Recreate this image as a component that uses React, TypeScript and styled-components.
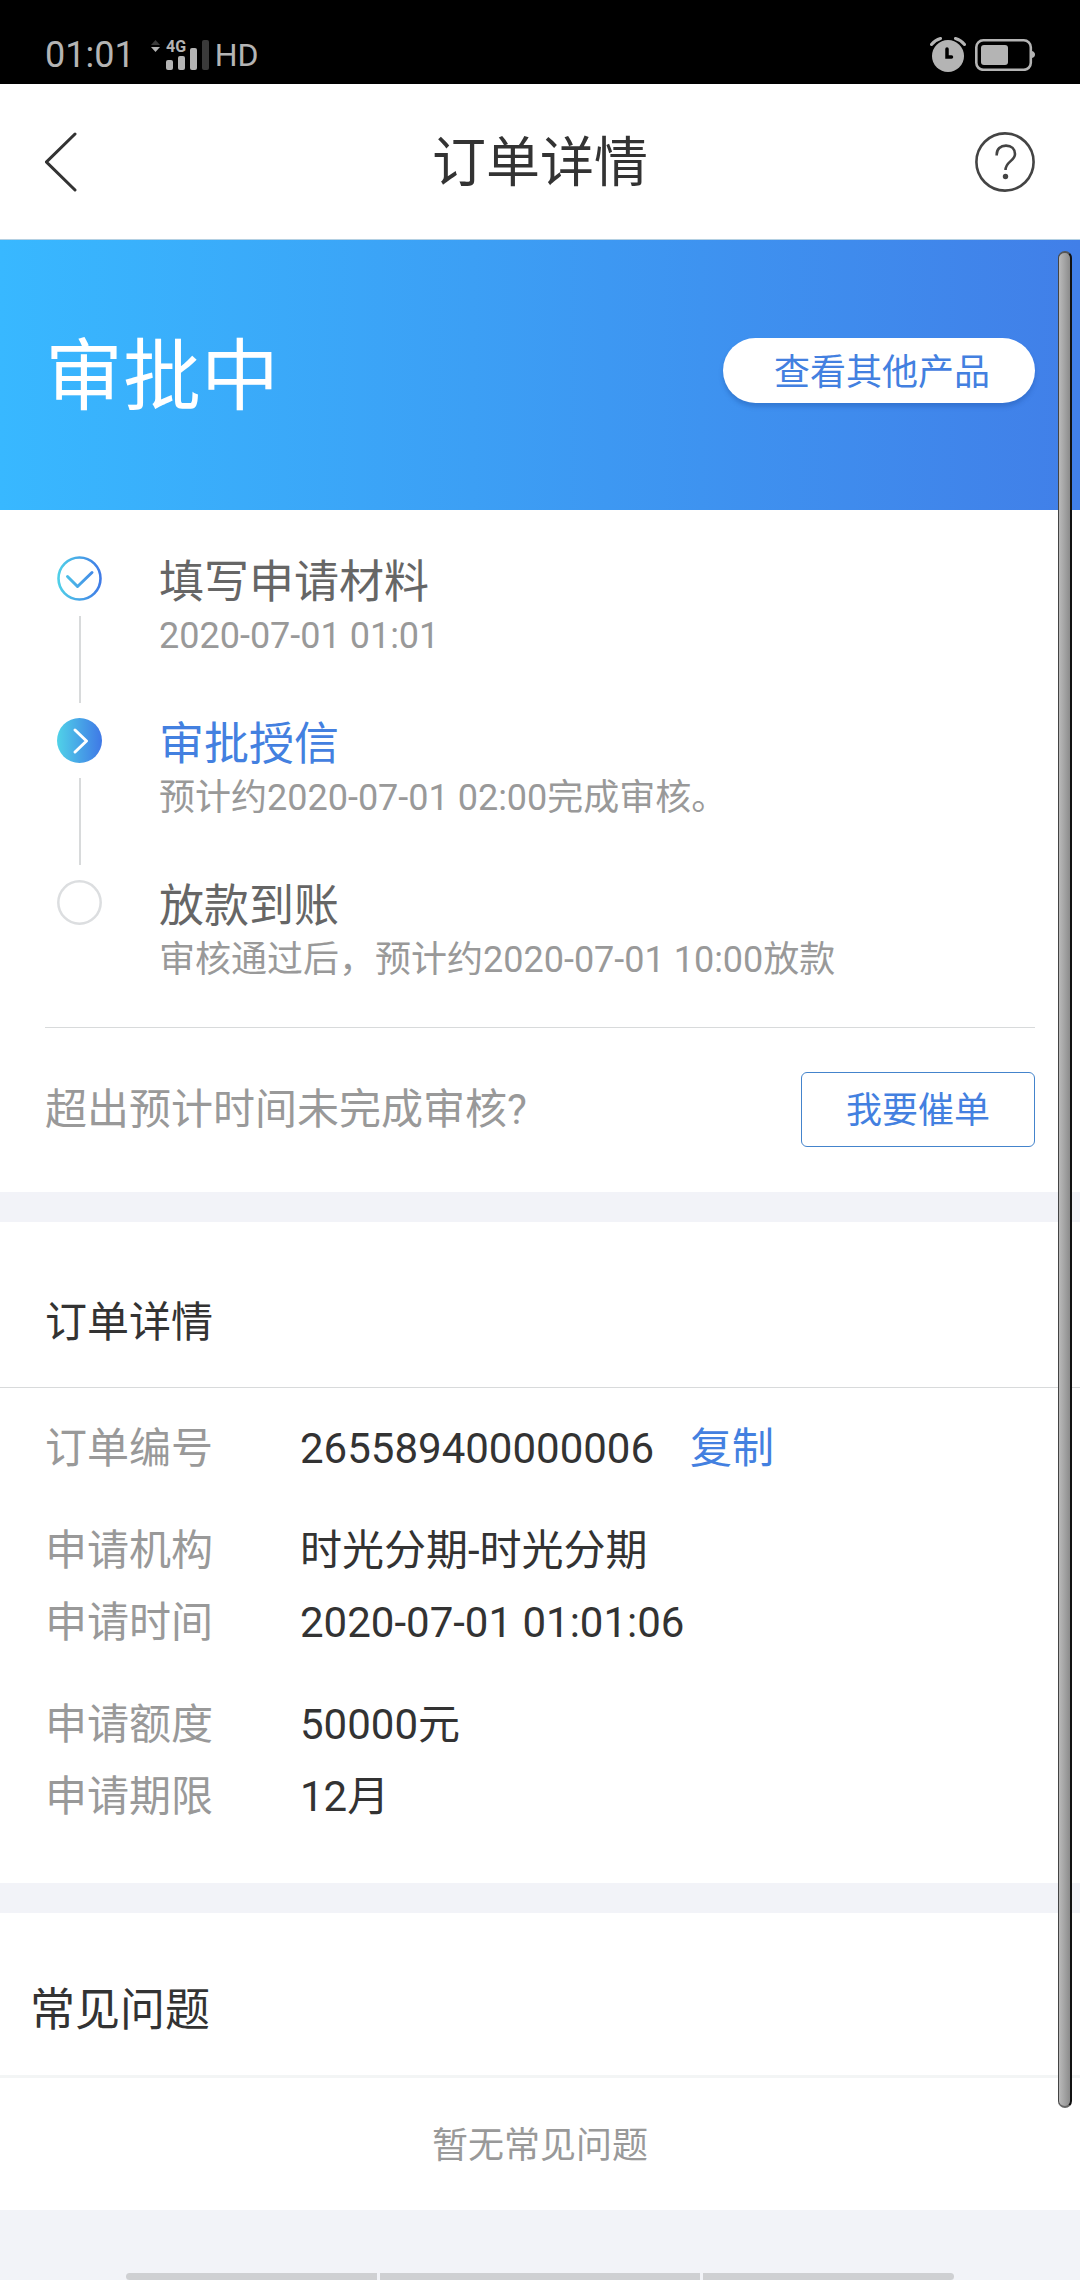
import React from "react";
import styled, { createGlobalStyle } from "styled-components";

const color = {
  ink: "#333333",
  inkSoft: "#666666",
  muted: "#999999",
  blue: "#4380e0",
  line: "#d8dadb",
  canvas: "#f2f3f8",
  system: "#b4b4b4",
  systemDim: "#3a3a3a",
};

const GlobalStyle = createGlobalStyle`
  *, *::before, *::after { box-sizing: border-box; }
  body {
    margin: 0;
    background: ${color.canvas};
    color: ${color.ink};
    font-family: Roboto, "Noto Sans CJK SC", sans-serif;
    font-size: 42px;
  }
  h1, h2, p, ol, dl, dd { margin: 0; padding: 0; font-weight: 400; }
  button { font-family: inherit; cursor: pointer; }
  svg { display: block; flex: none; }
`;

const Page = styled.div`
  position: relative;
  display: flex;
  flex-direction: column;
  min-height: 100vh;
`;

const StatusBar = styled.div`
  display: flex;
  align-items: center;
  justify-content: space-between;
  height: 84px;
  padding: 26px 45px 0;
  background: #000;
  color: ${color.system};
`;

const StatusGroup = styled.div<{ $gap: number }>`
  display: flex;
  align-items: center;
  gap: ${(p) => p.$gap}px;
`;

const StatusText = styled.span<{ $size: number }>`
  font-size: ${(p) => p.$size}px;
  line-height: 36px;
`;

const NavBar = styled.header`
  display: grid;
  grid-template-columns: 60px 1fr 60px;
  align-items: center;
  height: 156px;
  padding: 0 45px;
  background: #fff;
  border-bottom: 1px solid #b4d0e2;
`;

const NavTitle = styled.h1`
  padding-top: 4px;
  font-size: 54px;
  line-height: 72px;
  text-align: center;
`;

const IconButton = styled.button`
  width: 60px;
  height: 60px;
  padding: 0;
  border: 0;
  background: none;
`;

const Banner = styled.section`
  display: flex;
  align-items: flex-start;
  justify-content: space-between;
  padding: 98px 45px 92px;
  background: linear-gradient(90deg, #38b8ff, #417fe8);
`;

const BannerTitle = styled.h2`
  color: #fff;
  font-size: 78px;
  line-height: 80px;
`;

const PillButton = styled.button`
  height: 65px;
  padding: 5px 45px 0 51px;
  border: 0;
  border-radius: 33px;
  background: #fff;
  box-shadow: 0 4px 4px rgba(30, 80, 160, 0.35);
  color: ${color.blue};
  font-size: 36px;
  line-height: 60px;
`;

const Panel = styled.section`
  margin-bottom: 30px;
  background: #fff;
`;

const Steps = styled.ol`
  padding: 46px 45px 0 57px;
  list-style: none;
`;

const Step = styled.li`
  display: grid;
  grid-template-columns: 45px 1fr;
  column-gap: 57px;
  height: 162px;

  &:last-child {
    height: 147px;
  }
`;

const StepRail = styled.div`
  display: flex;
  flex-direction: column;
  align-items: center;
  gap: 15px;
`;

const StepLine = styled.span`
  width: 2px;
  height: 87px;
  background: ${color.line};
`;

const StepText = styled.div`
  padding-top: 2px;
`;

const StepTitle = styled.p<{ $active: boolean }>`
  color: ${(p) => (p.$active ? color.blue : color.inkSoft)};
  font-size: 45px;
  line-height: 50px;
`;

const StepNote = styled.p`
  color: ${color.muted};
  font-size: 36px;
  line-height: 56px;
`;

const UrgeRow = styled.div`
  display: flex;
  align-items: center;
  justify-content: space-between;
  margin: 0 45px;
  padding: 44px 0 45px;
  border-top: 1px solid ${color.line};
  color: ${color.muted};
  line-height: 72px;
`;

const OutlineButton = styled.button`
  height: 75px;
  padding: 3px 44px 0;
  border: 1px solid #4484cc;
  border-radius: 6px;
  background: #fff;
  color: ${color.blue};
  font-size: 36px;
  line-height: 70px;
`;

const OrderHeading = styled.h2`
  padding: 68px 45px 31px;
  border-bottom: 1px solid ${color.line};
  font-size: 42px;
  line-height: 66px;
`;

const OrderList = styled.div`
  display: flex;
  flex-direction: column;
  gap: 30px;
  padding: 25px 45px 50px;
`;

const OrderRow = styled.div`
  display: grid;
  grid-template-columns: 255px 1fr;
  line-height: 72px;
`;

const OrderLabel = styled.dt`
  color: ${color.muted};
`;

const OrderValue = styled.dd`
  display: flex;
  gap: 36px;
`;

const CopyButton = styled.button`
  padding: 0;
  border: 0;
  background: none;
  color: ${color.blue};
  font-size: 42px;
  line-height: 72px;
`;

const FaqHeading = styled.h2`
  padding: 68px 30px 34px;
  border-bottom: 3px solid #f3f5f5;
  font-size: 45px;
  line-height: 60px;
`;

const FaqEmpty = styled.p`
  padding: 32px 0 28px;
  color: ${color.muted};
  font-size: 36px;
  line-height: 72px;
  text-align: center;
`;

const GestureBar = styled.div`
  display: grid;
  grid-template-columns: 251fr 320fr 251fr;
  gap: 3px;
  height: 7px;
  margin: auto 126px 0;
`;

const GestureSegment = styled.span`
  background: #cfd0d3;

  &:first-child {
    border-radius: 4px 0 0 4px;
  }
  &:last-child {
    border-radius: 0 4px 4px 0;
  }
`;

const ScrollThumb = styled.div`
  position: absolute;
  top: 251px;
  right: 8px;
  bottom: 172px;
  width: 14px;
  border: solid;
  border-width: 2px 2px 2px 1px;
  border-color: #555 #111 #666 #444;
  border-radius: 7px;
  background: linear-gradient(90deg, #bababa, #8c8c8c);
`;

const SignalIcon = () => (
  <svg width="58" height="38" viewBox="0 -4 58 38" aria-hidden="true">
    <path d="M0 5 4.500 0 9 5z" fill={color.systemDim} />
    <path d="M0 7h9l-4.500 5z" fill={color.system} />
    <text x="15" y="12" fontSize="16" fontWeight="700" fontFamily="Roboto, sans-serif" fill={color.system}>
      4G
    </text>
    <rect x="15" y="20" width="7" height="10" rx="2" fill={color.system} />
    <rect x="27" y="16" width="7" height="14" rx="2" fill={color.system} />
    <rect x="39" y="8" width="7" height="22" rx="2" fill={color.system} />
    <rect x="51" y="0" width="7" height="30" rx="2" fill={color.systemDim} />
  </svg>
);

const AlarmIcon = () => (
  <svg width="36" height="36" viewBox="0 0 36 36" fill="none" strokeLinecap="round" aria-hidden="true">
    <circle cx="18" cy="19" r="16" fill={color.system} />
    <path d="M1.500 7.500Q5 3 10.500 1.500M34.500 7.500Q31 3 25.500 1.500" stroke={color.system} strokeWidth="3" />
    <path d="M17 12v8h4.500" stroke="#000" strokeWidth="3.500" />
  </svg>
);

const BatteryIcon = () => (
  <svg width="60" height="32" viewBox="0 0 60 32" aria-hidden="true">
    <rect x="1.300" y="1.300" width="54.500" height="29.500" rx="7" fill="none" stroke={color.system} strokeWidth="2.600" />
    <rect x="6" y="6" width="27" height="20" rx="3" fill={color.system} />
    <path d="M57 12q3 1 3 3.500T57 19z" fill={color.system} />
  </svg>
);

const BackIcon = () => (
  <svg width="60" height="60" viewBox="0 0 60 60" fill="none" aria-hidden="true">
    <path d="M30 2 1.500 30 30 58" stroke={color.ink} strokeWidth="3" strokeLinecap="round" />
  </svg>
);

const HelpIcon = () => (
  <svg width="60" height="60" viewBox="0 0 60 60" fill="none" aria-hidden="true">
    <circle cx="30" cy="30" r="28.600" stroke="#444" strokeWidth="2.600" />
    <path
      d="M21.700 23.500V22.500C21.700 17 25.500 13.600 31 13.600S40 17 40 22C40 29 30.500 29.500 30.500 38"
      stroke="#444"
      strokeWidth="2.600"
    />
    <circle cx="30.500" cy="44.500" r="2.700" fill="#444" />
  </svg>
);

type StepState = "done" | "current" | "pending";

const StepIcon = ({ state }: { state: StepState }) => {
  const gradient = `step-${state}`;
  return (
    <svg width="45" height="45" viewBox="0 0 45 45" fill="none" strokeLinecap="round" strokeLinejoin="round" aria-hidden="true">
      <defs>
        <linearGradient id={gradient} gradientUnits="userSpaceOnUse" x1="0" y1="0" x2="45" y2="0">
          <stop offset="0" stopColor="#50d2e8" />
          <stop offset="1" stopColor="#3f78e6" />
        </linearGradient>
      </defs>
      {state === "done" && (
        <g stroke={`url(#${gradient})`} strokeWidth="2.600">
          <circle cx="22.500" cy="22.500" r="21" />
          <path d="M10.500 20.500 20.500 30.500 35 16.500" strokeWidth="3" />
        </g>
      )}
      {state === "current" && (
        <>
          <circle cx="22.500" cy="22.500" r="22.500" fill={`url(#${gradient})`} />
          <path d="M18 12 29.500 23 18 34" stroke="#fff" strokeWidth="3" />
        </>
      )}
      {state === "pending" && <circle cx="22.500" cy="22.500" r="21.200" stroke="#dcdee0" strokeWidth="2.500" />}
    </svg>
  );
};

const steps: { state: StepState; title: string; note: string }[] = [
  { state: "done", title: "填写申请材料", note: "2020-07-01 01:01" },
  { state: "current", title: "审批授信", note: "预计约2020-07-01 02:00完成审核。" },
  { state: "pending", title: "放款到账", note: "审核通过后，预计约2020-07-01 10:00放款" },
];

const orderGroups: { label: string; value: string; copyable?: boolean }[][] = [
  [{ label: "订单编号", value: "265589400000006", copyable: true }],
  [
    { label: "申请机构", value: "时光分期-时光分期" },
    { label: "申请时间", value: "2020-07-01 01:01:06" },
  ],
  [
    { label: "申请额度", value: "50000元" },
    { label: "申请期限", value: "12月" },
  ],
];

export default function App() {
  return (
    <>
      <GlobalStyle />
      <Page>
        <StatusBar>
          <StatusGroup $gap={16}>
            <StatusText $size={36}>01:01</StatusText>
            <StatusGroup $gap={6}>
              <SignalIcon />
              <StatusText $size={32}>HD</StatusText>
            </StatusGroup>
          </StatusGroup>
          <StatusGroup $gap={9}>
            <AlarmIcon />
            <BatteryIcon />
          </StatusGroup>
        </StatusBar>

        <NavBar>
          <IconButton type="button" aria-label="返回">
            <BackIcon />
          </IconButton>
          <NavTitle>订单详情</NavTitle>
          <IconButton type="button" aria-label="帮助">
            <HelpIcon />
          </IconButton>
        </NavBar>

        <Banner>
          <BannerTitle>审批中</BannerTitle>
          <PillButton type="button">查看其他产品</PillButton>
        </Banner>

        <Panel>
          <Steps>
            {steps.map((step, index) => (
              <Step key={step.title}>
                <StepRail>
                  <StepIcon state={step.state} />
                  {index < steps.length - 1 && <StepLine />}
                </StepRail>
                <StepText>
                  <StepTitle $active={step.state === "current"}>{step.title}</StepTitle>
                  <StepNote>{step.note}</StepNote>
                </StepText>
              </Step>
            ))}
          </Steps>
          <UrgeRow>
            <p>超出预计时间未完成审核?</p>
            <OutlineButton type="button">我要催单</OutlineButton>
          </UrgeRow>
        </Panel>

        <Panel>
          <OrderHeading>订单详情</OrderHeading>
          <OrderList>
            {orderGroups.map((group) => (
              <dl key={group[0].label}>
                {group.map((row) => (
                  <OrderRow key={row.label}>
                    <OrderLabel>{row.label}</OrderLabel>
                    <OrderValue>
                      {row.value}
                      {row.copyable && <CopyButton type="button">复制</CopyButton>}
                    </OrderValue>
                  </OrderRow>
                ))}
              </dl>
            ))}
          </OrderList>
        </Panel>

        <Panel>
          <FaqHeading>常见问题</FaqHeading>
          <FaqEmpty>暂无常见问题</FaqEmpty>
        </Panel>

        <GestureBar>
          <GestureSegment />
          <GestureSegment />
          <GestureSegment />
        </GestureBar>
        <ScrollThumb />
      </Page>
    </>
  );
}
